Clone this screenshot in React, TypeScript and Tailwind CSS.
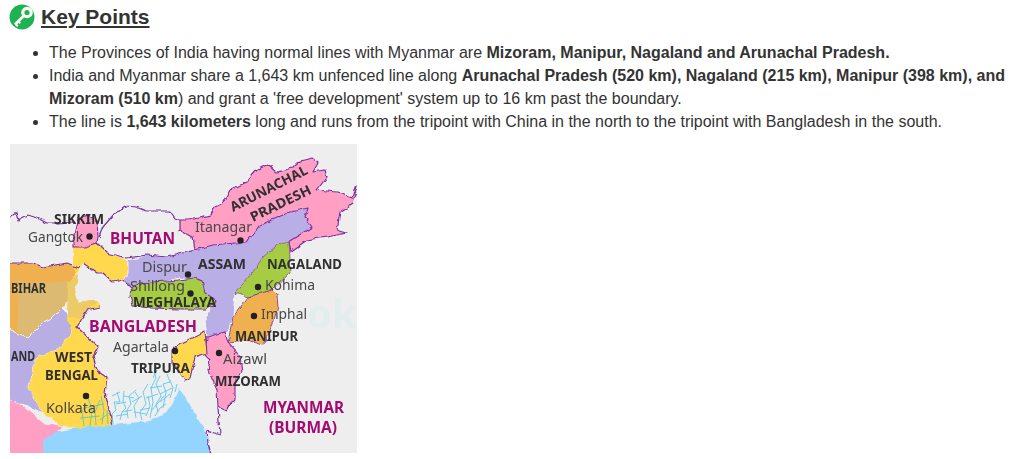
const purple = "#7a2f9f";
const mag = "#a30a72";
const dark = "#303030";
const gray = "#484848";

type L = [string, number, number, number, number, boolean, string];
const labels: L[] = [
  ["SIKKIM", 54, 224, 50, 13.5, true, dark],
  ["Gangtok", 28, 242, 55, 14, false, gray],
  ["BHUTAN", 110, 244, 65, 15.5, true, mag],
  ["Itanagar", 195, 232, 57, 14, false, gray],
  ["Dispur", 142, 272, 45, 14, false, gray],
  ["ASSAM", 198, 269, 48, 13.5, true, dark],
  ["NAGALAND", 267, 269, 75, 13.5, true, dark],
  ["Kohima", 265, 290, 50, 14, false, gray],
  ["Shillong", 130, 291, 55, 14, false, gray],
  ["MEGHALAYA", 133, 307, 83, 13.5, true, dark],
  ["BANGLADESH", 89, 332, 108, 16, true, mag],
  ["Imphal", 261, 319, 46, 14, false, gray],
  ["MANIPUR", 235, 341, 63, 13.5, true, dark],
  ["Agartala", 113, 352, 56, 14, false, gray],
  ["AND", 11, 361, 24, 13.5, true, dark],
  ["WEST", 55, 362, 37, 13.5, true, dark],
  ["BENGAL", 45, 380, 53, 13.5, true, dark],
  ["TRIPURA", 131, 373, 59, 13.5, true, dark],
  ["Aizawl", 223, 364, 44, 14, false, gray],
  ["MIZORAM", 215, 386, 66, 13.5, true, dark],
  ["Kolkata", 46, 413, 50, 14, false, gray],
  ["MYANMAR", 263, 413, 81, 15.5, true, mag],
  ["(BURMA)", 269, 433, 68, 15.5, true, mag],
  ["BIHAR", 11, 293, 35, 13.5, true, dark],
];

const dots = [
  [89.5, 236.5], [240.5, 240.5], [188, 274.5], [190.5, 293.5], [258, 287],
  [254, 316], [219, 353], [175, 351], [86, 396],
];

const delta = [
  "M113 424 L112 414 L116 410 L114 402 L120 402 L117 392 M120 420 L122 412 L126 408 L123 402 L124 391 M128 418 L127 410 L131 404 L129 396 L136 390",
  "M136 418 L134 406 L139 398 L135 392 M142 420 L140 412 L146 404 L143 392 L148 384 M146 416 L150 406 L148 396 M150 418 L153 402 L151 388 L156 378 L154 372",
  "M158 412 L156 404 L161 396 L156 384 L160 376 M163 408 L166 392 L163 384 L170 382 L167 374 M170 398 L173 388 L170 380 M175 392 L177 384 M155 416 L160 408 L166 404",
  "M116 404 L126 402 M132 402 L142 396 M146 398 L158 394 M153 378 L157 370 M112 396 L120 392 M122 412 L132 410 M140 410 L150 408 M160 402 L170 394 M116 416 L128 414 M124 396 L134 398 M134 412 L146 414 M150 388 L162 386 M160 394 L172 388 M152 410 L164 396",
];
const deltaGreen = "M84 426 L82 412 L86 404 M90 426 L92 410 L88 398 M96 425 L95 412 L100 400 M102 424 L104 410 L101 396 M80 418 L100 416 M84 408 L104 404 M108 424 L107 410 M100 420 L110 412";

function MapFigure() {
  return (
    <svg
      viewBox="10 144 347 309"
      className="block w-[347px] h-[309px] ml-[10px] mt-[11px] blur-[0.4px]"
      style={{ fontFamily: "'Noto Sans', sans-serif" }}
    >
      <defs>
        <filter id="rough" x="-5%" y="-5%" width="110%" height="110%">
          <feTurbulence type="fractalNoise" baseFrequency="0.14" numOctaves="2" seed="4" />
          <feDisplacementMap in="SourceGraphic" scale="5" xChannelSelector="R" yChannelSelector="G" />
        </filter>
      </defs>
      <rect x="10" y="144" width="347" height="309" fill="#eeeeee" />
      <g filter="url(#rough)">
        {/* Bihar */}
        <polygon points="5,263 33,263 43,267 67,263 80,268 70,283 68,300 63,307 50,320 43,323 28,338 5,327" fill="#f1b04f" />
        <polygon points="18,282 68,282 68,300 50,320 43,323 28,338 18,331" fill="#dcba72" />
        {/* Jharkhand / Chhattisgarh */}
        <polygon points="5,327 28,338 43,323 50,320 63,307 70,320 72,333 57,350 37,357 28,387 43,413 20,403 5,400" fill="#b9aee4" stroke="#f4f4f4" strokeWidth="1" />
        {/* Odisha */}
        <polygon points="5,400 20,403 43,423 62,427 43,443 43,460 5,460" fill="#ff9fc3" />
        {/* West Bengal */}
        <polygon points="73,247 85,247 97,243 107,253 127,260 128,272 123,280 113,282 103,273 97,273 83,263 80,268 72,283 68,300 67,317 72,333 57,350 37,357 28,387 43,413 62,427 80,428 113,425 105,393 107,377 97,370 93,357 98,347 77,327 87,310 100,307 98,300 90,300 78,302 75,290 78,275 73,262" fill="#ffd84e" />
        <polygon points="68,283 78,275 75,290 78,302 90,300 98,300 87,310 80,318 67,317" fill="#eccb66" />
        {/* Bay of Bengal */}
        <polygon points="43,460 43,443 53,432 78,428 113,425 130,423 150,421 162,415 172,405 180,388 190,405 197,417 205,432 208,443 212,460" fill="#93d5ff" />
        {/* Assam */}
        <polygon points="128,260 147,255 167,257 195,250 213,245 247,242 260,225 290,212 308,208 305,217 312,227 288,242 277,245 263,257 252,273 235,293 233,317 228,332 207,337 205,320 210,310 205,305 216,300 205,293 202,281 180,278 131,288 123,280 128,272" fill="#b9aee6" stroke="#f4f4f4" strokeWidth="1" />
        {/* Arunachal Pradesh */}
        <polygon points="180,220 187,220 200,218 210,215 213,208 223,203 230,190 247,182 257,170 268,164 277,172 293,168 300,161 312,158 318,163 313,172 325,170 327,177 317,190 337,192 352,198 355,187 357,186 353,203 340,212 337,230 347,233 327,237 307,240 290,252 288,242 312,227 305,217 308,208 290,212 260,225 247,242 213,245 195,250 193,237 180,230" fill="#ff9fc3" stroke={purple} strokeWidth="1.2" strokeLinejoin="round" />
        {/* Nagaland */}
        <polygon points="288,242 290,273 272,290 248,297 235,293 252,273 263,257 277,245" fill="#a5cc43" stroke={purple} strokeWidth="0.7" />
        {/* Meghalaya */}
        <polygon points="131,288 140,283 178,280 195,278 202,281 205,293 216,300 214,306 205,309 180,309 150,308 133,306 130,297" fill="#a5cc43" stroke={purple} strokeWidth="1.1" />
        {/* Manipur */}
        <polygon points="248,297 272,290 277,295 278,307 273,323 263,345 247,340 228,342 233,317" fill="#f1b04f" stroke={purple} strokeWidth="0.8" />
        {/* Mizoram */}
        <polygon points="207,337 225,332 228,342 240,355 242,373 235,380 235,400 225,410 218,407 217,390 208,370 210,360 205,355" fill="#ff9fc3" stroke={purple} strokeWidth="1.1" />
        {/* Tripura */}
        <polygon points="172,350 180,345 205,332 207,353 195,357 190,378 185,380 178,368 172,365" fill="#ffd84e" stroke={purple} strokeWidth="1.1" />
        {/* Sikkim */}
        <polygon points="78,218 88,215 97,220 98,237 97,243 85,247 73,247 73,240 75,230" fill="#ff9fc3" stroke={purple} strokeWidth="1.1" />
        {/* Borders */}
        <g fill="none" stroke={purple} strokeWidth="1.2" strokeLinejoin="round">
          <polyline points="5,222 13,215 16,213 18,220 28,215 37,218 47,223 55,223 75,222" />
          <polyline points="99,237 103,227 115,213 125,206 137,207 147,211 170,211 175,218 180,220" />
          <polyline points="97,243 107,253 127,258 147,255 167,257 195,250" />
          <polyline points="5,263 33,263 43,267 67,263 80,268" />
          <polyline points="83,263 97,273 103,273 113,282 123,280 131,288" />
          <polyline points="100,307 87,310 77,327 98,347 93,357 97,370 107,377 105,393 113,425" />
          <polyline points="218,407 220,435 207,431 208,443 212,460" />
        </g>
      </g>
      {/* Delta */}
      <g fill="none" stroke="#5ccaf0" strokeWidth="0.9">
        {delta.map((d, i) => <path key={i} d={d} />)}
        <path d={deltaGreen} stroke="#63c7a8" />
      </g>
      {/* Watermark */}
      <text x="307" y="328" fontSize="40" fontWeight="700" fill="#c9eeee" opacity="0.3">ok</text>
      {dots.map(([cx, cy], i) => <circle key={i} cx={cx} cy={cy} r="3.2" fill="#222222" />)}
      {labels.map(([t, x, y, w, s, b, c]) => (
        <text key={t} x={x} y={y} fontSize={s} fontWeight={b ? 700 : 400} fill={c} textLength={w} lengthAdjust="spacingAndGlyphs">{t}</text>
      ))}
      <text transform="translate(233 212) rotate(-27)" fontSize="13.5" fontWeight="700" fill={dark} textLength="85" lengthAdjust="spacingAndGlyphs">ARUNACHAL</text>
      <text transform="translate(253 222) rotate(-26)" fontSize="13.5" fontWeight="700" fill={dark} textLength="66" lengthAdjust="spacingAndGlyphs">PRADESH</text>
    </svg>
  );
}

export default function App() {
  return (
    <div className="w-[1020px] h-[459px] bg-white overflow-hidden text-[#333333] font-['Liberation_Sans',sans-serif]">
      <div className="flex items-center gap-[6px] pl-[9px] pt-[4px] h-[29px]">
        <svg viewBox="0 0 26 26" className="w-[26px] h-[26px] shrink-0">
          <circle cx="13" cy="13" r="12.5" fill="#1fb251" />
          <circle cx="18" cy="8.5" r="4.2" fill="none" stroke="#ffffff" strokeWidth="3.2" />
          <path d="M15.5 11 L6 20.5" fill="none" stroke="#ffffff" strokeWidth="2.6" />
          <path d="M6.5 20 L8.8 22.2 M9.2 17.3 L11.2 19.3" fill="none" stroke="#ffffff" strokeWidth="2" />
        </svg>
        <span className="text-[21px] leading-[26px] font-bold underline">Key Points</span>
      </div>
      <ul className="list-disc mt-[12px] pl-[49px] pr-[8px] text-[16px] leading-[23px]">
        <li>The Provinces of India having normal lines with Myanmar are <b>Mizoram, Manipur, Nagaland and Arunachal Pradesh.</b></li>
        <li>India and Myanmar share a 1,643 km unfenced line along <b>Arunachal Pradesh (520 km), Nagaland (215 km), Manipur (398 km), and Mizoram (510 km</b>) and grant a 'free development' system up to 16 km past the boundary.</li>
        <li>The line is <b>1,643 kilometers</b> long and runs from the tripoint with China in the north to the tripoint with Bangladesh in the south.</li>
      </ul>
      <MapFigure />
    </div>
  );
}
